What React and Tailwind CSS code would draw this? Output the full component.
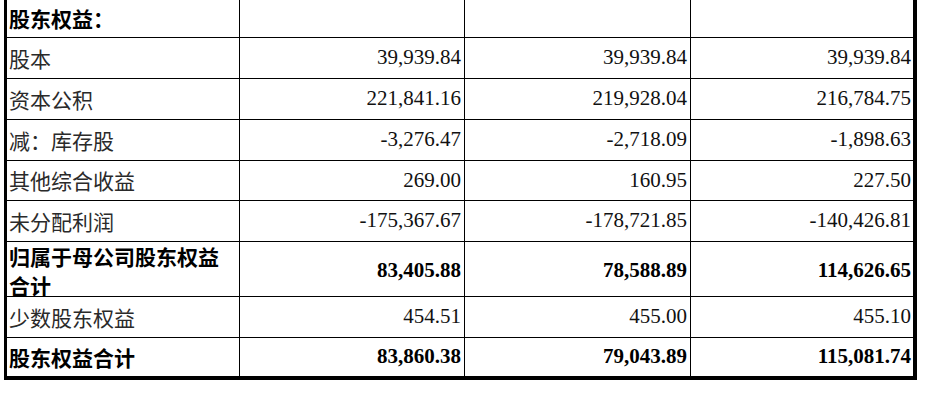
import React from 'react';

const rows = [
  { label: '股东权益：', values: ['', '', ''], bold: true, h: 'h-[37px]', first: true },
  { label: '股本', values: ['39,939.84', '39,939.84', '39,939.84'], h: 'h-[41px]' },
  { label: '资本公积', values: ['221,841.16', '219,928.04', '216,784.75'], h: 'h-[41px]' },
  { label: '减：库存股', values: ['-3,276.47', '-2,718.09', '-1,898.63'], h: 'h-[41px]' },
  { label: '其他综合收益', values: ['269.00', '160.95', '227.50'], h: 'h-[40px]' },
  { label: '未分配利润', values: ['-175,367.67', '-178,721.85', '-140,426.81'], h: 'h-[41px]' },
  { label: '归属于母公司股东权益合计', values: ['83,405.88', '78,588.89', '114,626.65'], bold: true, h: 'h-[55px]' },
  { label: '少数股东权益', values: ['454.51', '455.00', '455.10'], h: 'h-[41px]' },
  { label: '股东权益合计', values: ['83,860.38', '79,043.89', '115,081.74'], bold: true, h: 'h-[39px]' },
];

const cjk = "font-['Noto_Sans_CJK_SC','Noto_Sans',sans-serif]";
const serif = "font-['Liberation_Serif','Times_New_Roman',serif]";

const App = () => {
  return (
    <div className="w-[929px] h-[401px] bg-white overflow-hidden">
      <div className="ml-[4px] w-[913px] border-l-[3px] border-r-[4px] border-b-[4px] border-black">
        {rows.map((row, i) => (
          <div
            key={i}
            className={`grid grid-cols-[232px_225px_226px_223px] ${row.h} ${row.first ? '' : 'border-t border-black'}`}
          >
            <div
              className={`flex items-center pl-[2px] text-[21px] leading-[29px] ${cjk} ${
                row.bold ? 'font-bold text-black' : 'text-[#2a2a2a]'
              }`}
            >
              {row.label}
            </div>
            {row.values.map((v, j) => (
              <div
                key={j}
                className={`flex items-center justify-end border-l border-black text-[21px] ${serif} ${
                  j === 2 ? 'pr-[2px]' : 'pr-[3px]'
                } ${row.bold ? 'font-bold text-black' : 'text-[#111]'}`}
              >
                {v}
              </div>
            ))}
          </div>
        ))}
      </div>
    </div>
  );
};

export default App;
